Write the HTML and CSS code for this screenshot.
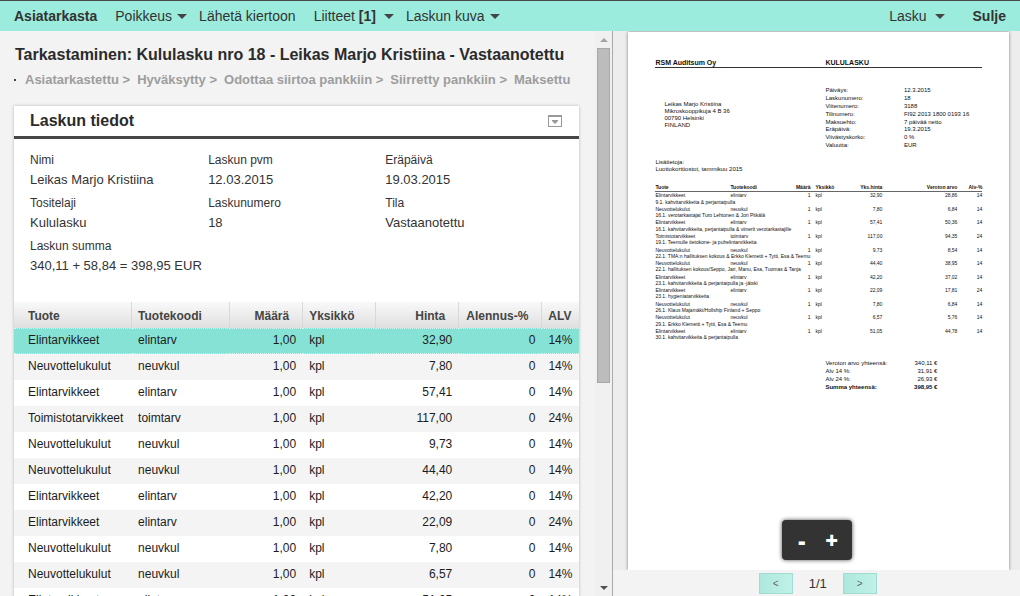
FILE: index.html
```html
<!DOCTYPE html>
<html lang="fi">
<head>
<meta charset="utf-8">
<title>Tarkastaminen: Kululasku nro 18</title>
<link rel="stylesheet" href="styles.css">
</head>
<body>
<header class="topbar">
  <nav class="menu">
    <button class="menu-item plain strong">Asiatarkasta</button>
    <button class="menu-item">Poikkeus<span class="caret"></span></button>
    <button class="menu-item plain">Lähetä kiertoon</button>
    <button class="menu-item wide">Liitteet&nbsp;<b>[1]</b><span class="caret"></span></button>
    <button class="menu-item">Laskun kuva<span class="caret"></span></button>
  </nav>
  <nav class="menu menu-right">
    <button class="menu-item wide">Lasku<span class="caret"></span></button>
    <button class="menu-item strong">Sulje</button>
  </nav>
</header>
<main class="panes">
  <section class="left">
    <div class="left-content">
      <h1 class="title">Tarkastaminen: Kululasku nro 18 - Leikas Marjo Kristiina - Vastaanotettu</h1>
      <ol class="steps">
        <li>Asiatarkastettu &gt;</li><li>Hyväksytty &gt;</li><li>Odottaa siirtoa pankkiin &gt;</li><li>Siirretty pankkiin &gt;</li><li>Maksettu</li>
      </ol>
      <article class="card">
        <div class="card-head">
          <h2 class="card-title">Laskun tiedot</h2>
          <button class="collapse" aria-label="Pienennä">
            <svg width="14" height="12" viewBox="0 0 14 12"><path d="M0 0h14v12H0z" fill="#999"/><path d="M1 2h12v9H1z" fill="#fff"/><path d="M4 5h6v1L7 9 4 6z" fill="#999"/></svg>
          </button>
        </div>
        <dl class="facts">
          <div><dt>Nimi</dt><dd>Leikas Marjo Kristiina</dd></div>
          <div><dt>Laskun pvm</dt><dd>12.03.2015</dd></div>
          <div><dt>Eräpäivä</dt><dd>19.03.2015</dd></div>
          <div><dt>Tositelaji</dt><dd>Kululasku</dd></div>
          <div><dt>Laskunumero</dt><dd>18</dd></div>
          <div><dt>Tila</dt><dd>Vastaanotettu</dd></div>
          <div><dt>Laskun summa</dt><dd>340,11 + 58,84 = 398,95 EUR</dd></div>
        </dl>
        <table class="rows">
          <colgroup><col class="r1"><col class="r2"><col class="r3"><col class="r3"><col class="r4"><col class="r4"><col class="r5"></colgroup>
          <thead><tr><th>Tuote</th><th>Tuotekoodi</th><th class="num">Määrä</th><th>Yksikkö</th><th class="num">Hinta</th><th class="num">Alennus-%</th><th>ALV</th></tr></thead>
          <tbody>
            <tr class="selected"><td>Elintarvikkeet</td><td>elintarv</td><td class="num">1,00</td><td>kpl</td><td class="num">32,90</td><td class="num">0</td><td class="num">14%</td></tr>
            <tr><td>Neuvottelukulut</td><td>neuvkul</td><td class="num">1,00</td><td>kpl</td><td class="num">7,80</td><td class="num">0</td><td class="num">14%</td></tr>
            <tr><td>Elintarvikkeet</td><td>elintarv</td><td class="num">1,00</td><td>kpl</td><td class="num">57,41</td><td class="num">0</td><td class="num">14%</td></tr>
            <tr><td>Toimistotarvikkeet</td><td>toimtarv</td><td class="num">1,00</td><td>kpl</td><td class="num">117,00</td><td class="num">0</td><td class="num">24%</td></tr>
            <tr><td>Neuvottelukulut</td><td>neuvkul</td><td class="num">1,00</td><td>kpl</td><td class="num">9,73</td><td class="num">0</td><td class="num">14%</td></tr>
            <tr><td>Neuvottelukulut</td><td>neuvkul</td><td class="num">1,00</td><td>kpl</td><td class="num">44,40</td><td class="num">0</td><td class="num">14%</td></tr>
            <tr><td>Elintarvikkeet</td><td>elintarv</td><td class="num">1,00</td><td>kpl</td><td class="num">42,20</td><td class="num">0</td><td class="num">14%</td></tr>
            <tr><td>Elintarvikkeet</td><td>elintarv</td><td class="num">1,00</td><td>kpl</td><td class="num">22,09</td><td class="num">0</td><td class="num">24%</td></tr>
            <tr><td>Neuvottelukulut</td><td>neuvkul</td><td class="num">1,00</td><td>kpl</td><td class="num">7,80</td><td class="num">0</td><td class="num">14%</td></tr>
            <tr><td>Neuvottelukulut</td><td>neuvkul</td><td class="num">1,00</td><td>kpl</td><td class="num">6,57</td><td class="num">0</td><td class="num">14%</td></tr>
            <tr><td>Elintarvikkeet</td><td>elintarv</td><td class="num">1,00</td><td>kpl</td><td class="num">51,05</td><td class="num">0</td><td class="num">14%</td></tr>
          </tbody>
        </table>
      </article>
    </div>
    <div class="scrollbar" aria-hidden="true">
      <span class="arrow up"></span>
      <span class="track"><span class="thumb"></span></span>
      <span class="arrow down"></span>
    </div>
  </section>
  <section class="right">
    <div class="viewer">
      <article class="paper">
        <header class="p-head"><span>RSM Auditsum Oy</span><span>KULULASKU</span></header>
        <div class="p-info">
          <address class="p-address">Leikas Marjo Kristiina<br>Mikroskooppikuja 4 B 36<br>00790 Helsinki<br>FINLAND</address>
          <dl class="p-meta">
            <dt>Päiväys:</dt><dd>12.3.2015</dd>
            <dt>Laskunumero:</dt><dd>18</dd>
            <dt>Viitenumero:</dt><dd>3188</dd>
            <dt>Tilinumero:</dt><dd>FI92 2013 1800 0193 16</dd>
            <dt>Maksuehto:</dt><dd>7 päivää netto</dd>
            <dt>Eräpäivä:</dt><dd>19.3.2015</dd>
            <dt>Viivästyskorko:</dt><dd>0 %</dd>
            <dt>Valuutta:</dt><dd>EUR</dd>
          </dl>
        </div>
        <p class="p-note">Lisätietoja:<br>Luottokorttiostot, tammikuu 2015</p>
        <table class="p-rows">
          <colgroup><col class="c1"><col class="c2"><col class="c3"><col class="c3"><col class="c4"><col class="c1"><col class="c5"></colgroup>
          <thead><tr><th>Tuote</th><th>Tuotekoodi</th><th class="num">Määrä</th><th class="unit">Yksikkö</th><th class="num">Yks.hinta</th><th class="num">Veroton arvo</th><th class="num">Alv-%</th></tr></thead>
          <tbody>
            <tr><td>Elintarvikkeet</td><td>elintarv</td><td class="num">1</td><td class="unit">kpl</td><td class="num">32,90</td><td class="num">28,86</td><td class="num">14</td></tr>
            <tr class="desc"><td colspan="7">9.1. kahvitarvikkeita &amp; perjantaipulla</td></tr>
            <tr><td>Neuvottelukulut</td><td>neuvkul</td><td class="num">1</td><td class="unit">kpl</td><td class="num">7,80</td><td class="num">6,84</td><td class="num">14</td></tr>
            <tr class="desc"><td colspan="7">16.1. verotarkastajat Turo Lehtonen &amp; Jori Pitkälä</td></tr>
            <tr><td>Elintarvikkeet</td><td>elintarv</td><td class="num">1</td><td class="unit">kpl</td><td class="num">57,41</td><td class="num">50,36</td><td class="num">14</td></tr>
            <tr class="desc"><td colspan="7">16.1. kahvitarvikkeita, perjantaipulla &amp; viinerit verotarkastajille</td></tr>
            <tr><td>Toimistotarvikkeet</td><td>toimtarv</td><td class="num">1</td><td class="unit">kpl</td><td class="num">117,00</td><td class="num">94,35</td><td class="num">24</td></tr>
            <tr class="desc"><td colspan="7">19.1. Teemulle tietokone- ja puhelintarvikkeita</td></tr>
            <tr><td>Neuvottelukulut</td><td>neuvkul</td><td class="num">1</td><td class="unit">kpl</td><td class="num">9,73</td><td class="num">8,54</td><td class="num">14</td></tr>
            <tr class="desc"><td colspan="7">22.1. TMA:n hallituksen kokous &amp; Erkko Klemetti + Tytti, Esa &amp; Teemu</td></tr>
            <tr><td>Neuvottelukulut</td><td>neuvkul</td><td class="num">1</td><td class="unit">kpl</td><td class="num">44,40</td><td class="num">38,95</td><td class="num">14</td></tr>
            <tr class="desc"><td colspan="7">22.1. hallituksen kokous/Seppo, Jari, Manu, Esa, Tuomas &amp; Tanja</td></tr>
            <tr><td>Elintarvikkeet</td><td>elintarv</td><td class="num">1</td><td class="unit">kpl</td><td class="num">42,20</td><td class="num">37,02</td><td class="num">14</td></tr>
            <tr class="desc"><td colspan="7">23.1. kahvitarvikkeita &amp; perjantaipulla ja -jätski</td></tr>
            <tr><td>Elintarvikkeet</td><td>elintarv</td><td class="num">1</td><td class="unit">kpl</td><td class="num">22,09</td><td class="num">17,81</td><td class="num">24</td></tr>
            <tr class="desc"><td colspan="7">23.1. hygieniatarvikkeita</td></tr>
            <tr><td>Neuvottelukulut</td><td>neuvkul</td><td class="num">1</td><td class="unit">kpl</td><td class="num">7,80</td><td class="num">6,84</td><td class="num">14</td></tr>
            <tr class="desc"><td colspan="7">26.1. Klaus Majamäki/Hollship Finland + Seppo</td></tr>
            <tr><td>Neuvottelukulut</td><td>neuvkul</td><td class="num">1</td><td class="unit">kpl</td><td class="num">6,57</td><td class="num">5,76</td><td class="num">14</td></tr>
            <tr class="desc"><td colspan="7">29.1. Erkko Klemetti + Tytti, Esa &amp; Teemu</td></tr>
            <tr><td>Elintarvikkeet</td><td>elintarv</td><td class="num">1</td><td class="unit">kpl</td><td class="num">51,05</td><td class="num">44,78</td><td class="num">14</td></tr>
            <tr class="desc"><td colspan="7">30.1. kahvitarvikkeita &amp; perjantaipulla</td></tr>
          </tbody>
        </table>
        <dl class="p-totals">
          <dt>Veroton arvo yhteensä:</dt><dd>340,11 €</dd>
          <dt>Alv 14 %:</dt><dd>31,91 €</dd>
          <dt>Alv 24 %:</dt><dd>26,93 €</dd>
          <dt class="sum">Summa yhteensä:</dt><dd class="sum">398,95 €</dd>
        </dl>
      </article>
      <div class="zoom"><button class="zoom-btn">-</button><button class="zoom-btn">+</button></div>
    </div>
    <footer class="pager">
      <button class="page-btn">&lt;</button>
      <span class="page-no">1/1</span>
      <button class="page-btn">&gt;</button>
    </footer>
  </section>
</main>
</body>
</html>
```
FILE: styles.css
```css
* { box-sizing: border-box; }

body {
  margin: 0;
  height: 100vh;
  overflow: hidden;
  display: flex;
  flex-direction: column;
  background: #f3f3f3;
  color: #333;
  font-family: "Liberation Sans", Arial, sans-serif;
  font-size: 12px;
}

button {
  font: inherit;
  color: inherit;
  border: 0;
  padding: 0;
  background: none;
}

h1, h2, p, dl, dd, ol { margin: 0; padding: 0; }

/* Top bar */
.topbar {
  flex: none;
  display: flex;
  justify-content: space-between;
  height: 31px;
  padding: 0 14px;
  border-top: 1px solid #474747;
  background: #9becdc;
}
.menu { display: flex; gap: 12px; }
.menu-right { gap: 28px; }
.menu-item {
  display: flex;
  align-items: center;
  font-size: 14px;
  white-space: nowrap;
}
.plain { padding-right: 6px; }
.strong { font-weight: bold; }
.caret {
  margin-left: 5px;
  border: 5px solid transparent;
  border-top-color: #444;
  border-bottom: 0;
}
.wide .caret { margin-left: 8px; }

/* Panes */
.panes { flex: 1; min-height: 0; display: flex; }
.left {
  flex: 613;
  min-width: 0;
  display: flex;
  border-right: 1px solid #aaa;
}
.left-content {
  flex: 1;
  min-width: 0;
  overflow: hidden;
  padding: 14px 16px 0 14px;
}
.title {
  padding-left: 1px;
  font-size: 16px;
  line-height: 20px;
  white-space: nowrap;
  color: #2b2b2b;
}
.steps {
  display: flex;
  gap: 7px;
  margin-top: 4px;
  list-style: none;
  font-size: 13px;
  font-weight: bold;
  line-height: 22px;
  white-space: nowrap;
  color: #9d9d9d;
}
.steps::before {
  content: "";
  align-self: center;
  width: 2px;
  height: 2px;
  margin-right: 2px;
  background: #444;
}

/* Invoice card */
.card {
  margin-top: 15px;
  background: #fff;
  box-shadow: 0 0 3px rgba(0, 0, 0, 0.25);
}
.card-head {
  display: flex;
  align-items: center;
  justify-content: space-between;
  height: 33px;
  padding: 0 17px 0 16px;
  border-bottom: 3px solid #474747;
}
.card-title { font-size: 16px; color: #2b2b2b; }
.collapse { display: flex; }
.facts {
  display: grid;
  grid-template-columns: 178fr 177fr 194fr;
  padding: 11px 0 23px 16px;
}
.facts > div { height: 43px; }
.facts dt { line-height: 20px; }
.facts dd { font-size: 13px; line-height: 20px; white-space: nowrap; }

.rows {
  width: 100%;
  table-layout: fixed;
  border-collapse: separate;
  border-spacing: 0;
  color: #1c1c1c;
}
.r1 { width: 118px; }
.r2 { width: 98px; }
.r3 { width: 73px; }
.r4 { width: 83px; }
.r5 { width: 37px; }
.rows th, .rows td {
  height: 26px;
  padding: 0 6px 2px;
  text-align: left;
  white-space: nowrap;
  overflow: hidden;
}
.rows th {
  padding: 2px 6px 0;
  border-right: 1px solid #d8d8d8;
  background: linear-gradient(#f9f9f9, #dfdfdf);
  color: #444;
}
.rows th:last-child { border-right: 0; }
.rows th:first-child, .rows td:first-child { padding-left: 14px; }
.rows .num { text-align: right; padding-right: 7px; }
.rows th.num { padding-right: 13px; }
.rows tbody tr:nth-child(even) { background: #f4f4f4; }
.rows .selected { background: #86e2d5; }
.rows .selected td {
  padding-bottom: 2px;
  border-top: 1px dotted #d5f5f0;
  border-bottom: 1px dotted #d5f5f0;
}

/* Scrollbar */
.scrollbar {
  flex: none;
  width: 17px;
  display: flex;
  flex-direction: column;
  align-items: center;
  background: #f0f0f0;
}
.arrow {
  margin: 7px 0 6px;
  border: 4px solid transparent;
}
.up { border-top: 0; border-bottom-color: #a3a3a3; }
.down { border-bottom: 0; border-top-color: #505050; }
.track { flex: 1; width: 13px; }
.thumb {
  display: block;
  height: 63%;
  border: 1px solid #a8a8a8;
  background: #bcbcbc;
}

/* Document viewer */
.right {
  flex: 407;
  min-width: 0;
  display: flex;
  flex-direction: column;
}
.viewer {
  position: relative;
  flex: 1;
  min-height: 0;
  overflow: hidden;
  display: flex;
  padding: 1px 11px 0 15px;
  background: #ededed;
}
.paper {
  flex: 1;
  padding: 26px 27px 0;
  background: #fff;
  box-shadow: 0 0 3px rgba(0, 0, 0, 0.5);
  color: #111;
  font-size: 6px;
}
.p-head, .p-info {
  display: grid;
  grid-template-columns: 170fr 157fr;
}
.p-head {
  border-bottom: 1px solid #333;
  font-size: 7px;
  font-weight: bold;
  line-height: 9px;
}
.p-info { margin-top: 19px; }
.p-address {
  padding: 14px 0 0 9px;
  font-style: normal;
  line-height: 7px;
}
.p-meta {
  display: grid;
  grid-template-columns: 1fr 1fr;
  height: 63px;
  white-space: nowrap;
}
.p-note { margin-top: 9px; line-height: 7px; }
.p-rows {
  width: 100%;
  height: 157px;
  margin-top: 11px;
  table-layout: fixed;
  border-collapse: separate;
  border-spacing: 0;
  font-size: 5px;
  line-height: 6px;
}
.c1 { width: 75px; }
.c2 { width: 50px; }
.c3 { width: 30px; }
.c4 { width: 42px; }
.c5 { width: 25px; }
.p-rows th, .p-rows td {
  padding: 0;
  text-align: left;
  white-space: nowrap;
}
.p-rows th { padding-bottom: 1px; border-bottom: 1px solid #666; }
.p-rows .num { text-align: right; }
.p-rows .unit { padding-left: 5px; }
.p-rows .desc td { vertical-align: top; }
.p-totals {
  display: grid;
  grid-template-columns: 70px 42px;
  margin: 18px 0 0 52%;
  line-height: 8px;
  white-space: nowrap;
}
.p-totals dd { text-align: right; }
.sum { font-weight: bold; }

.zoom {
  position: absolute;
  left: 50%;
  bottom: 10px;
  display: flex;
  justify-content: center;
  width: 70px;
  height: 40px;
  margin-left: -35px;
  border-radius: 4px;
  background: #333;
  box-shadow: 0 0 4px rgba(0, 0, 0, 0.7);
}
.zoom-btn {
  width: 30px;
  color: #fff;
  font-family: "Open Sans", "Liberation Sans", sans-serif;
  font-size: 22px;
  font-weight: 800;
}

.pager {
  flex: none;
  display: flex;
  justify-content: center;
  align-items: center;
  gap: 16px;
  height: 26px;
  padding-left: 2px;
}
.page-btn {
  width: 34px;
  height: 21px;
  border: 1px solid #9fdcd1;
  background: linear-gradient(90deg, #aee8dc, #c0f1e7);
  color: #666;
  font-size: 10px;
}
.page-no { font-size: 13px; }
```
